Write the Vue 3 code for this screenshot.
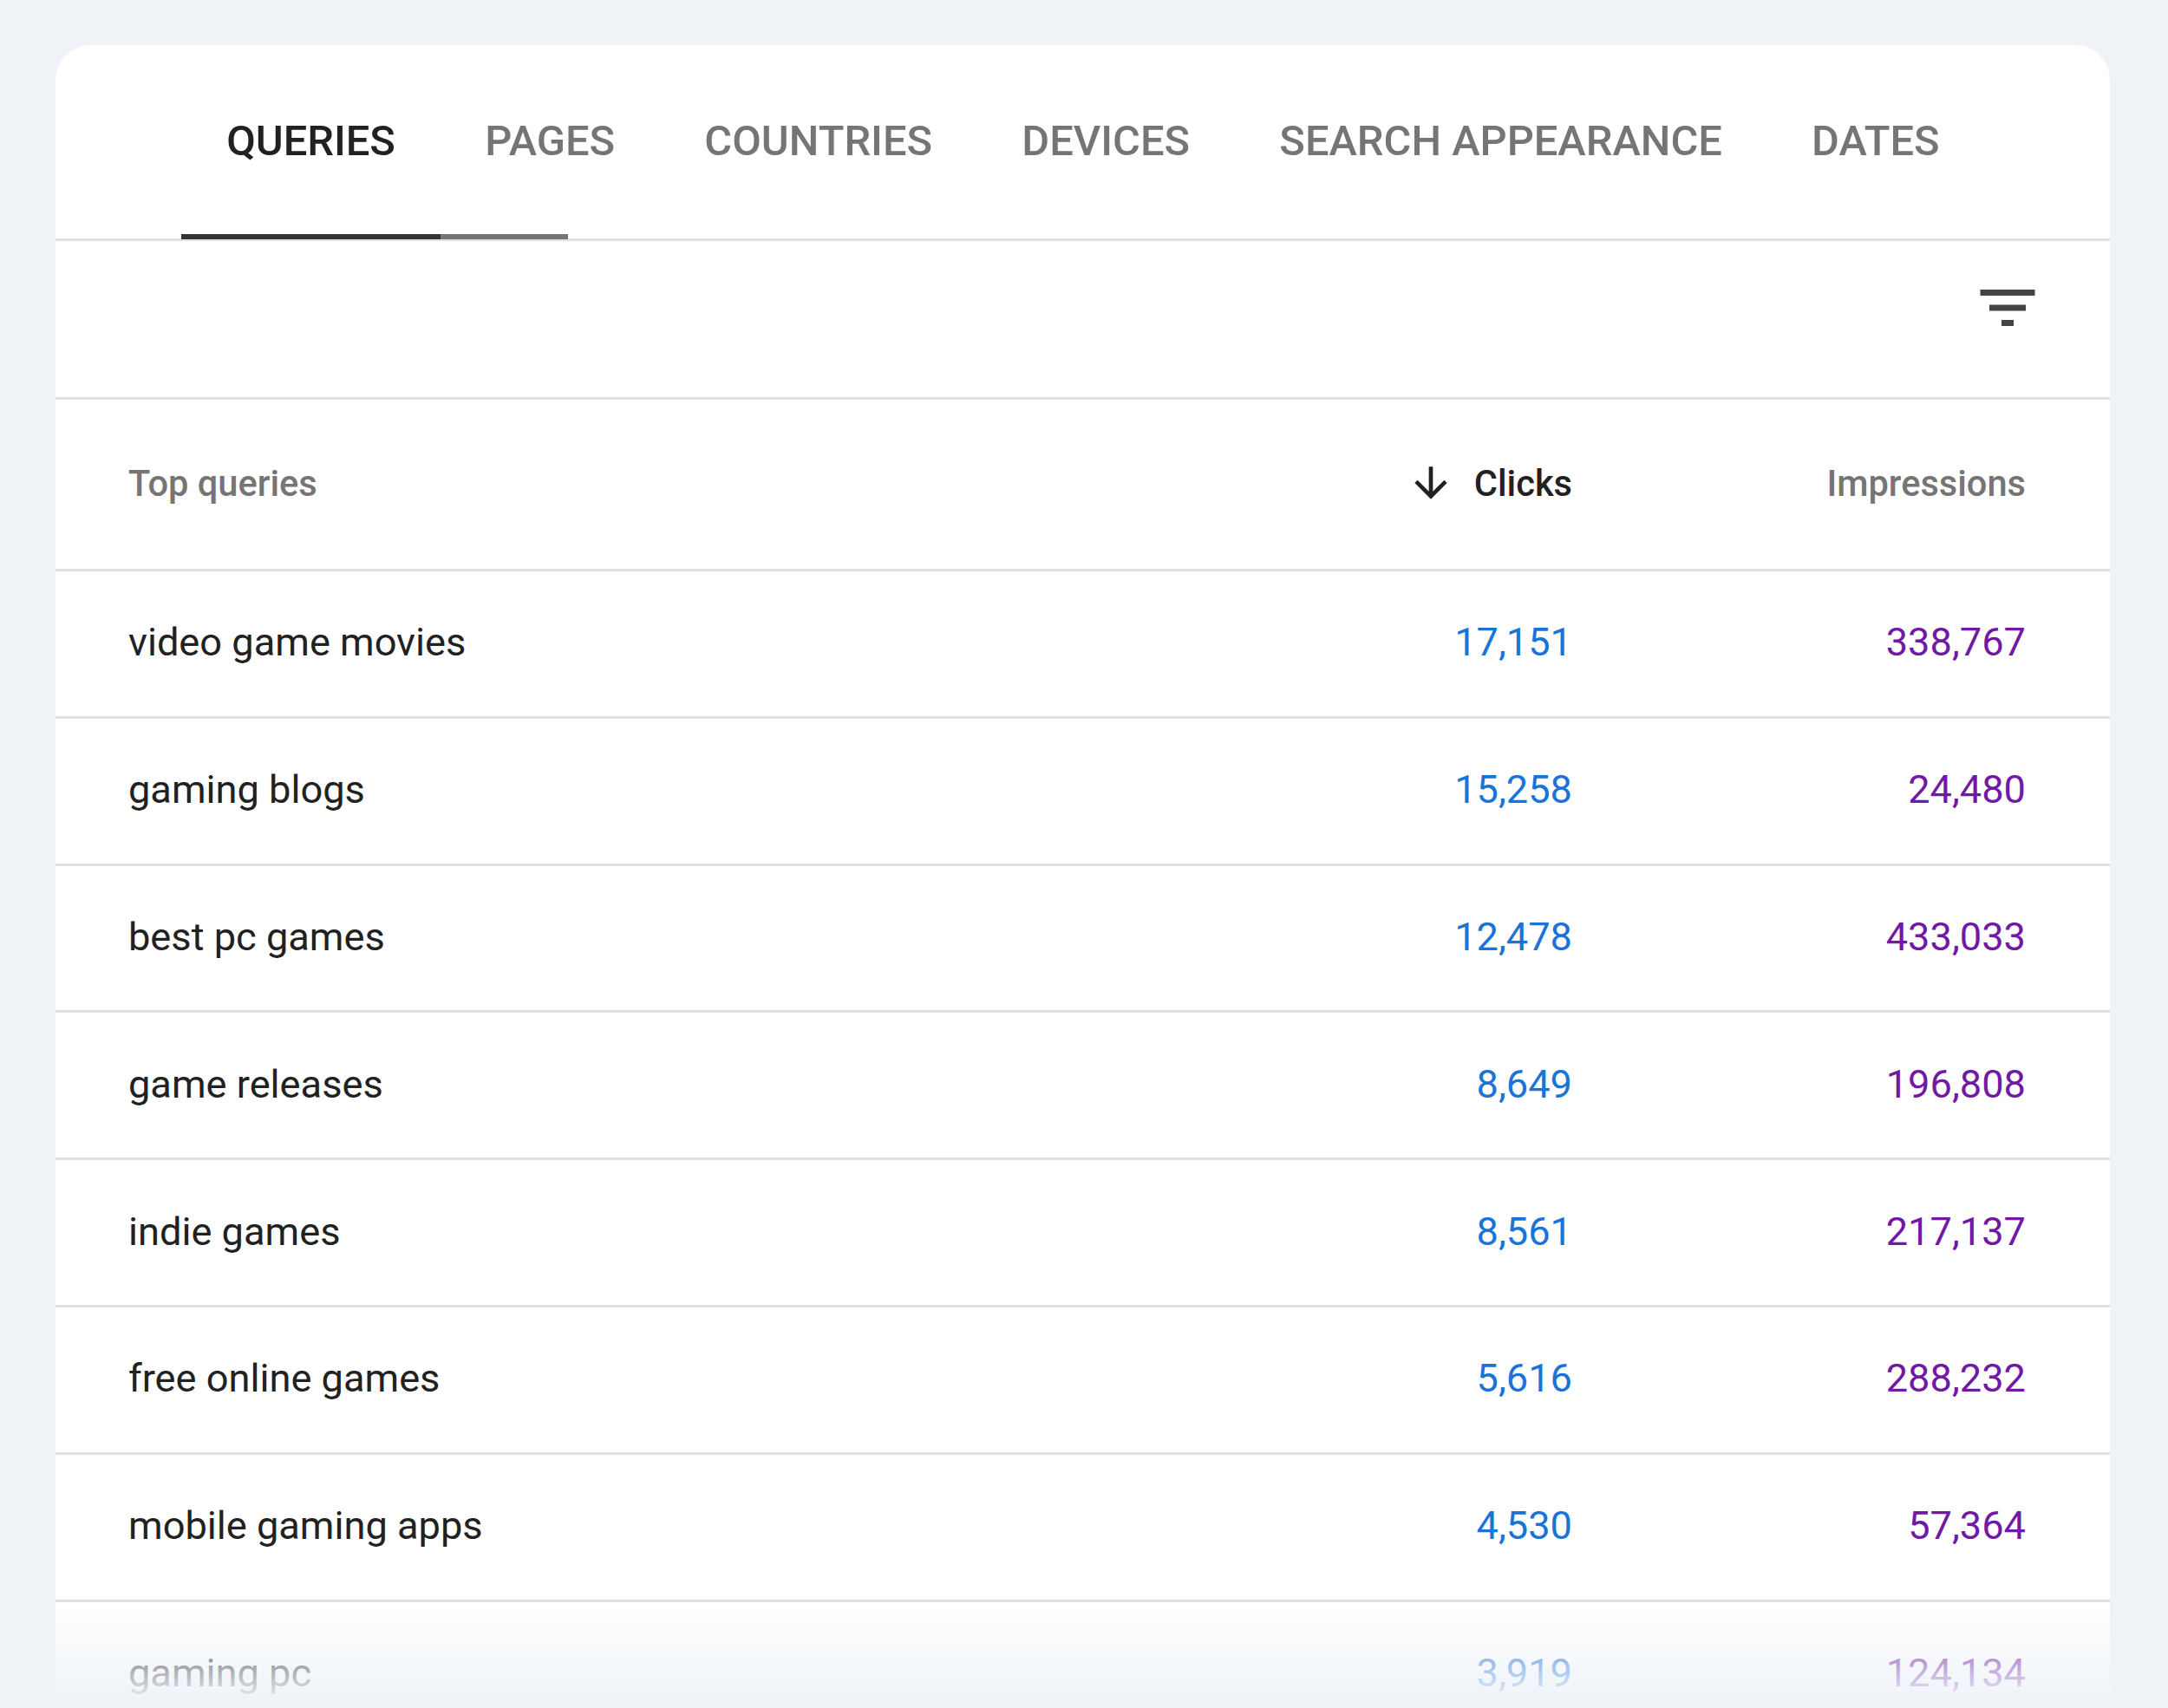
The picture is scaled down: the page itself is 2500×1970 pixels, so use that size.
<template>
  <div class="page">
    <div class="card">
      <div class="tabs">
        <div
          v-for="(tab, i) in tabs"
          :key="tab"
          class="tab"
          :class="{ active: i === 0 }"
        >{{ tab }}</div>
        <div class="ink">
          <span class="ink-dark"></span>
          <span class="ink-grey"></span>
        </div>
      </div>

      <div class="toolbar">
        <svg class="filter-icon" viewBox="0 0 24 24">
          <path d="M10 18h4v-2h-4v2zM3 6v2h18V6H3zm3 7h12v-2H6v2z" />
        </svg>
      </div>

      <div class="row head">
        <div class="col-name">Top queries</div>
        <div class="col-num sorted">
          <svg class="sort-icon" viewBox="0 0 24 24">
            <path d="M20 12l-1.41-1.41L13 16.17V4h-2v12.17l-5.58-5.59L4 12l8 8 8-8z" />
          </svg>
          <span>Clicks</span>
        </div>
        <div class="col-num">Impressions</div>
      </div>

      <div v-for="item in rows" :key="item.query" class="row item">
        <div class="col-name">{{ item.query }}</div>
        <div class="col-num clicks">{{ item.clicks }}</div>
        <div class="col-num impressions">{{ item.impressions }}</div>
      </div>

      <div class="fade"></div>
    </div>
  </div>
</template>

<script setup>
const tabs = ['QUERIES', 'PAGES', 'COUNTRIES', 'DEVICES', 'SEARCH APPEARANCE', 'DATES']

const rows = [
  { query: 'video game movies', clicks: '17,151', impressions: '338,767' },
  { query: 'gaming blogs', clicks: '15,258', impressions: '24,480' },
  { query: 'best pc games', clicks: '12,478', impressions: '433,033' },
  { query: 'game releases', clicks: '8,649', impressions: '196,808' },
  { query: 'indie games', clicks: '8,561', impressions: '217,137' },
  { query: 'free online games', clicks: '5,616', impressions: '288,232' },
  { query: 'mobile gaming apps', clicks: '4,530', impressions: '57,364' },
  { query: 'gaming pc', clicks: '3,919', impressions: '124,134' },
]
</script>

<style>
body {
  margin: 0;
  background: #eff3f8;
}
</style>

<style scoped>
.page {
  height: 1970px;
  box-sizing: border-box;
  padding: 52px 67px 6px 64px;
  overflow: hidden;
  background: #eff3f8;
  font-family: Roboto, "Liberation Sans", sans-serif;
}
.card {
  position: relative;
  height: 100%;
  overflow: hidden;
  background: #fff;
  border-radius: 40px 40px 0 0;
}
.tabs {
  position: relative;
  display: flex;
  height: 226px;
  padding-left: 145.5px;
  box-sizing: border-box;
  border-bottom: 3px solid #e0e0e0;
}
.tab {
  padding: 0 51.65px;
  height: 223px;
  line-height: 221px;
  font-size: 48.8px;
  font-weight: 500;
  color: #757575;
  white-space: nowrap;
}
.tab.active {
  color: #212121;
}
.ink {
  position: absolute;
  left: 145px;
  bottom: -1px;
  display: flex;
  height: 6px;
}
.ink-dark {
  width: 299px;
  background: #333;
}
.ink-grey {
  width: 147px;
  background: #757575;
}
.toolbar {
  display: flex;
  justify-content: flex-end;
  height: 183px;
  box-sizing: border-box;
  padding: 35px 76px 0 0;
  border-bottom: 3px solid #e0e0e0;
}
.filter-icon {
  width: 84px;
  height: 84px;
  fill: #444;
}
.row {
  display: grid;
  grid-template-columns: 1fr 330px 523px;
  align-items: center;
  padding: 0 97px 3px 84px;
  box-sizing: border-box;
  border-bottom: 3px solid #e0e0e0;
}
.head {
  height: 198px;
  font-size: 41.6px;
  font-weight: 500;
  color: #757575;
}
.item {
  height: 169.8px;
  font-size: 45.2px;
  color: #212121;
}
.col-num {
  text-align: right;
}
.sorted {
  display: flex;
  justify-content: flex-end;
  align-items: center;
  gap: 22px;
  color: #212121;
}
.sort-icon {
  width: 56px;
  height: 56px;
  fill: #212121;
}
.clicks {
  color: #1a73d8;
}
.impressions {
  color: #7119a6;
}
.fade {
  position: absolute;
  left: 0;
  right: 0;
  bottom: 0;
  height: 116px;
  background: linear-gradient(to bottom, rgba(239, 243, 248, 0), #eff3f8);
}
</style>
